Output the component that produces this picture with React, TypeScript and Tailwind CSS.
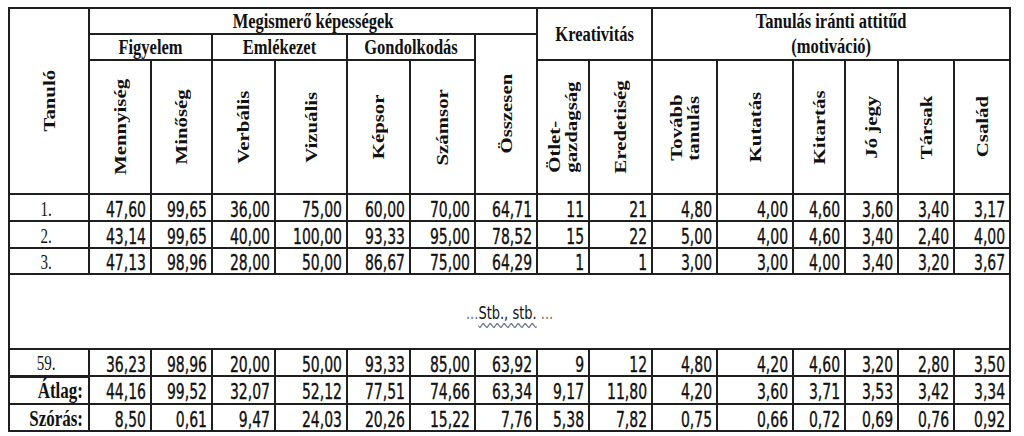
import React from 'react'

type Row = {
  label: string
  values: string[]
  bold?: boolean
  thickTop?: boolean
  height: string
}

const colWidths = [80, 62, 61, 63, 72, 63, 65, 62, 52, 63, 65, 76, 52, 53, 56, 56]

const rowsTop: Row[] = [
  {
    label: '1.',
    height: 'h-[27px]',
    values: ['47,60', '99,65', '36,00', '75,00', '60,00', '70,00', '64,71', '11', '21', '4,80', '4,00', '4,60', '3,60', '3,40', '3,17']
  },
  {
    label: '2.',
    height: 'h-[27px]',
    values: ['43,14', '99,65', '40,00', '100,00', '93,33', '95,00', '78,52', '15', '22', '5,00', '4,00', '4,60', '3,40', '2,40', '4,00']
  },
  {
    label: '3.',
    height: 'h-[23px]',
    values: ['47,13', '98,96', '28,00', '50,00', '86,67', '75,00', '64,29', '1', '1', '3,00', '3,00', '4,00', '3,40', '3,20', '3,67']
  }
]

const rowsBottom: Row[] = [
  {
    label: '59.',
    height: 'h-[27px]',
    values: ['36,23', '98,96', '20,00', '50,00', '93,33', '85,00', '63,92', '9', '12', '4,80', '4,20', '4,60', '3,20', '2,80', '3,50']
  },
  {
    label: 'Átlag:',
    bold: true,
    thickTop: true,
    height: 'h-[28px]',
    values: ['44,16', '99,52', '32,07', '52,12', '77,51', '74,66', '63,34', '9,17', '11,80', '4,20', '3,60', '3,71', '3,53', '3,42', '3,34']
  },
  {
    label: 'Szórás:',
    bold: true,
    height: 'h-[27px]',
    values: ['8,50', '0,61', '9,47', '24,03', '20,26', '15,22', '7,76', '5,38', '7,82', '0,75', '0,66', '0,72', '0,69', '0,76', '0,92']
  }
]

const cell = 'border-2 border-[#1f1f1f] p-0 align-middle'

// header text, stretched a little like the scanned table
const HeadText = ({ children }: { children: React.ReactNode }) => (
  <span className="inline-block font-['Liberation_Serif',serif] text-[16.5px] font-bold leading-[20px] [transform:scaleY(1.25)]">
    {children}
  </span>
)

const Vertical = ({ children }: { children: React.ReactNode }) => (
  <div className="flex justify-center">
    <div className="text-left font-['Liberation_Serif',serif] text-[16px] font-bold leading-[17px] [transform:rotate(180deg)_scaleY(1.3)] [writing-mode:vertical-rl]">
      {children}
    </div>
  </div>
)

const VerticalHead = ({ children }: { children: React.ReactNode }) => (
  <th className={cell}>
    <Vertical>{children}</Vertical>
  </th>
)

const NumCell = ({ value }: { value: string }) => (
  <td className={`${cell} pr-[4px] text-right`}>
    <span className="inline-block font-['DejaVu_Sans',sans-serif] text-[14px] leading-none [-webkit-text-stroke:0.25px_#111] [transform:scaleY(1.55)]">
      {value}
    </span>
  </td>
)

const DataRow = ({ row }: { row: Row }) => (
  <tr className={row.height}>
    <td
      className={`${cell} ${row.thickTop ? 'border-t-[3px]' : ''} ${
        row.bold ? 'pr-[5px] text-right' : 'pr-[6px] text-center'
      }`}
    >
      <span
        className={`inline-block font-['Liberation_Serif',serif] leading-none ${
          row.bold ? 'text-[17px] font-bold [transform:scaleY(1.3)]' : 'text-[15px] [transform:scaleY(1.35)]'
        }`}
      >
        {row.label}
      </span>
    </td>
    {row.values.map((v, i) => (
      <NumCell key={i} value={v} />
    ))}
  </tr>
)

export default function App() {
  return (
    <div className="h-[436px] w-[1024px] overflow-hidden bg-white pl-[8px] pt-[7px] text-[#111]">
      <table className="w-[1003px] table-fixed border-collapse">
        <colgroup>
          {colWidths.map((w, i) => (
            <col key={i} style={{ width: w }} />
          ))}
        </colgroup>
        <thead>
          <tr className="h-[25px]">
            <th rowSpan={3} className={cell}>
              <Vertical>Tanuló</Vertical>
            </th>
            <th colSpan={7} className={`${cell} text-center`}>
              <HeadText>Megismerő képességek</HeadText>
            </th>
            <th colSpan={2} rowSpan={2} className={`${cell} text-center`}>
              <HeadText>Kreativitás</HeadText>
            </th>
            <th colSpan={6} rowSpan={2} className={`${cell} text-center`}>
              <HeadText>
                Tanulás iránti attitűd
                <br />
                (motiváció)
              </HeadText>
            </th>
          </tr>
          <tr className="h-[26px]">
            <th colSpan={2} className={`${cell} text-center`}>
              <HeadText>Figyelem</HeadText>
            </th>
            <th colSpan={2} className={`${cell} text-center`}>
              <HeadText>Emlékezet</HeadText>
            </th>
            <th colSpan={2} className={`${cell} text-center`}>
              <HeadText>Gondolkodás</HeadText>
            </th>
            <th rowSpan={2} className={cell}>
              <Vertical>Összesen</Vertical>
            </th>
          </tr>
          <tr className="h-[134px]">
            <VerticalHead>Mennyiség</VerticalHead>
            <VerticalHead>Minőség</VerticalHead>
            <VerticalHead>Verbális</VerticalHead>
            <VerticalHead>Vizuális</VerticalHead>
            <VerticalHead>Képsor</VerticalHead>
            <VerticalHead>Számsor</VerticalHead>
            <VerticalHead>
              Ötlet-
              <br />
              gazdagság
            </VerticalHead>
            <VerticalHead>Eredetiség</VerticalHead>
            <VerticalHead>
              Tovább
              <br />
              tanulás
            </VerticalHead>
            <VerticalHead>Kutatás</VerticalHead>
            <VerticalHead>Kitartás</VerticalHead>
            <VerticalHead>Jó jegy</VerticalHead>
            <VerticalHead>Társak</VerticalHead>
            <VerticalHead>Család</VerticalHead>
          </tr>
        </thead>
        <tbody>
          {rowsTop.map((r) => (
            <DataRow key={r.label} row={r} />
          ))}
          <tr className="h-[75px]">
            <td colSpan={16} className={`${cell} text-center`}>
              <span className="inline-block font-['DejaVu_Sans',sans-serif] text-[13px] leading-none [transform:scaleY(1.3)]">
                <span className="text-gray-500">...</span>
                <span className="underline decoration-gray-500 decoration-wavy decoration-1 underline-offset-2">Stb., stb.</span>
                <span className="text-gray-500"> ...</span>
              </span>
            </td>
          </tr>
          {rowsBottom.map((r) => (
            <DataRow key={r.label} row={r} />
          ))}
        </tbody>
      </table>
    </div>
  )
}
